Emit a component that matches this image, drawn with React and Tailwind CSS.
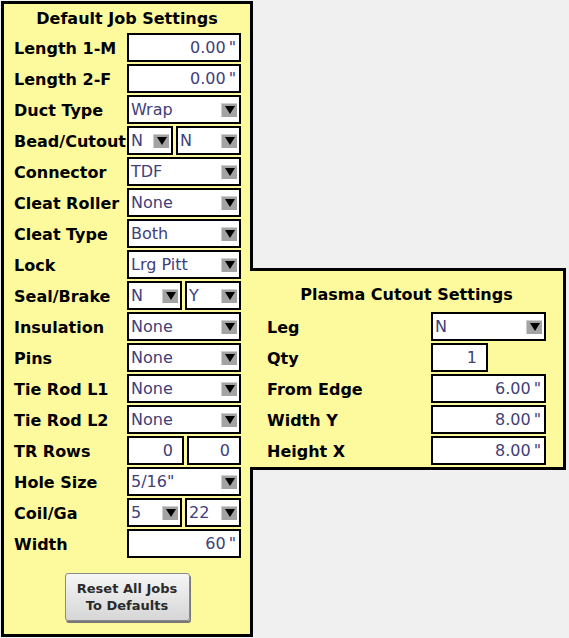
import React from "react";

const font = "font-['DejaVu_Sans',sans-serif]";
const valueText = "text-[16px] text-[#40407a] font-normal leading-none";

// grey drop button with the black triangle
function Arrow() {
  return (
    <span className="ml-auto mr-[2px] flex h-[14px] w-[16px] shrink-0 items-center justify-center border-t border-l border-[#cfcfcf] bg-[#a3a3a3]">
      <svg width="10" height="8" viewBox="0 0 10 8">
        <path d="M0 0h10L5 8z" fill="#000" />
      </svg>
    </span>
  );
}

function Select({ value, width = "w-[114px]" }) {
  return (
    <div className={`${width} flex h-[29px] items-center border-2 border-black bg-white pl-[2px]`}>
      <span className={`${valueText} pt-[1px]`}>{value}</span>
      <Arrow />
    </div>
  );
}

function TextBox({ value, unit = true, width = "w-[114px]" }) {
  return (
    <div
      className={`${width} flex h-[29px] items-center justify-end border-2 border-black bg-white pt-[1px] ${
        unit ? "pr-[3px]" : "pr-[9px]"
      }`}
    >
      <span className={valueText}>{value}</span>
      {unit && <span className={`${valueText} ml-[3px] text-[14px] font-extralight`}>"</span>}
    </div>
  );
}

function Row({ label, children, labelWidth = "w-[123px] pl-[10px]" }) {
  return (
    <div className="mb-[2px] flex h-[29px] items-center">
      <div className={`${labelWidth} shrink-0 pt-[2px] text-[16px] font-bold text-black`}>{label}</div>
      <div className="flex gap-[3px]">{children}</div>
    </div>
  );
}

export default function App() {
  return (
    <div className={`${font} flex h-[638px] w-[569px] items-start bg-[#f0f0f0] pl-[1px] pt-[1px]`}>
      {/* Default job settings */}
      <div className="flex h-[636px] w-[252px] shrink-0 flex-col border-[3px] border-black bg-[#fdfa9d]">
        <div className="flex h-[29px] items-center justify-center text-[16px] font-bold text-black">
          Default Job Settings
        </div>
        <Row label="Length 1-M">
          <TextBox value="0.00" />
        </Row>
        <Row label="Length 2-F">
          <TextBox value="0.00" />
        </Row>
        <Row label="Duct Type">
          <Select value="Wrap" />
        </Row>
        <Row label="Bead/Cutout">
          <Select value="N" width="w-[46px]" />
          <Select value="N" width="w-[65px]" />
        </Row>
        <Row label="Connector">
          <Select value="TDF" />
        </Row>
        <Row label="Cleat Roller">
          <Select value="None" />
        </Row>
        <Row label="Cleat Type">
          <Select value="Both" />
        </Row>
        <Row label="Lock">
          <Select value="Lrg Pitt" />
        </Row>
        <Row label="Seal/Brake">
          <Select value="N" width="w-[55px]" />
          <Select value="Y" width="w-[56px]" />
        </Row>
        <Row label="Insulation">
          <Select value="None" />
        </Row>
        <Row label="Pins">
          <Select value="None" />
        </Row>
        <Row label="Tie Rod L1">
          <Select value="None" />
        </Row>
        <Row label="Tie Rod L2">
          <Select value="None" />
        </Row>
        <Row label="TR Rows">
          <TextBox value="0" unit={false} width="w-[57px]" />
          <TextBox value="0" unit={false} width="w-[54px]" />
        </Row>
        <Row label="Hole Size">
          <Select value={'5/16"'} />
        </Row>
        <Row label="Coil/Ga">
          <Select value="5" width="w-[55px]" />
          <Select value="22" width="w-[56px]" />
        </Row>
        <Row label="Width">
          <TextBox value="60" />
        </Row>

        <div className="mt-[13px] flex justify-center">
          <button className="h-[48px] w-[125px] rounded-[3px] border border-[#8a8a8a] bg-gradient-to-b from-[#f6f6f6] to-[#d6d6d6] text-[13px] font-bold leading-[17px] text-[#2a2a2a] shadow-[1px_2px_0_#777]">
            Reset All Jobs
            <br />
            To Defaults
          </button>
        </div>
      </div>

      {/* Plasma cutout settings */}
      <div className="relative z-10 -ml-[3px] mt-[267px] h-[202px] w-[316px] shrink-0 border-[3px] border-l-0 border-black bg-[#fdfa9d]">
        <div className="pt-[14px] pb-[7px] text-center text-[16px] font-bold leading-[20px] text-black">
          Plasma Cutout Settings
        </div>
        <Row label="Leg" labelWidth="w-[181px] pl-[17px]">
          <Select value="N" width="w-[115px]" />
        </Row>
        <Row label="Qty" labelWidth="w-[181px] pl-[17px]">
          <TextBox value="1" unit={false} width="w-[57px]" />
        </Row>
        <Row label="From Edge" labelWidth="w-[181px] pl-[17px]">
          <TextBox value="6.00" width="w-[115px]" />
        </Row>
        <Row label="Width Y" labelWidth="w-[181px] pl-[17px]">
          <TextBox value="8.00" width="w-[115px]" />
        </Row>
        <Row label="Height X" labelWidth="w-[181px] pl-[17px]">
          <TextBox value="8.00" width="w-[115px]" />
        </Row>
      </div>
    </div>
  );
}
